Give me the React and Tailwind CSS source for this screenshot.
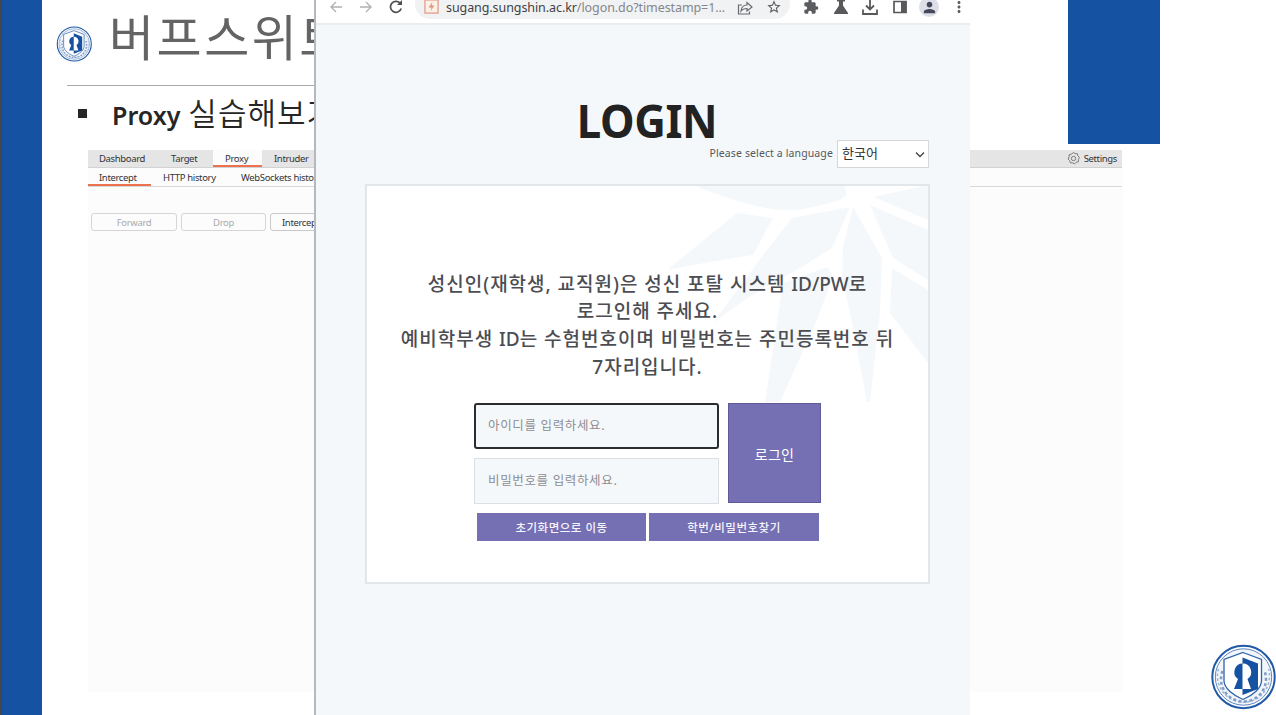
import React from "react";
import { MdExtension, MdStarOutline, MdPerson, MdMoreVert } from "react-icons/md";

const KR = "font-['Noto_Sans','Noto_Sans_CJK_KR',sans-serif]";

function Emblem({ className }) {
  return (
    <svg viewBox="0 0 66 66" className={className}>
      <circle cx="33.500" cy="33" r="31.200" fill="#fff" stroke="#2159a6" strokeWidth="2" />
      <circle cx="33.500" cy="33" r="28.200" fill="#f1f5fa" stroke="#4d7bb8" strokeWidth="0.900" />
      <path d="M8.500 25A26 26 0 1 0 58.500 25" fill="none" stroke="#9bb3d6" strokeWidth="1.500" strokeDasharray="2.500 2.200" />
      <path d="M12.500 27A22.500 22.500 0 1 0 54.500 27" fill="none" stroke="#7f9dc8" strokeWidth="2.500" strokeDasharray="3 2.500" />
      <path d="M33 8.500l18.500 7v21c0 8-9 15-18.500 19-9.500-4-19-11-19-19v-21z" fill="#fff" stroke="#2f64ab" strokeWidth="1.300" />
      <path d="M32.500 13.500L48 19.500V45l-15.500 6z" fill="#1553a2" />
      <path d="M33 19.500a8.500 8.500 0 0 0-5 15.500L24 45h9z" fill="#1553a2" />
      <path d="M32.500 19.500a8.500 8.500 0 0 1 5 15.500L41 45h-8.500z" fill="#fff" />
    </svg>
  );
}

function Slide() {
  return (
    <div className="flex h-full w-full bg-white">
      <div className="w-[42px] shrink-0 border-l-2 border-[#41464f] bg-[#1553a2]" />
      <div className="flex min-w-0 flex-1 flex-col">
        <div className="flex h-[150px] items-start justify-between pr-[116px]">
          <div className="flex w-[400px] flex-col">
            <div className="ml-[25px] flex h-[86px] w-[250px] items-start border-b border-[#aaa]">
              <Emblem className="-ml-[11px] mt-[26px] h-9 w-9 shrink-0" />
              <h1 className={`${KR} ml-[17px] whitespace-nowrap text-[49px] font-normal leading-[74px] tracking-[2.500px] text-[#646464]`}>버프스위트</h1>
            </div>
            <div className="flex h-[56px] items-center pl-9">
              <span className="mt-[-1px] h-[9px] w-[9px] bg-[#262626]" />
              <span className={`${KR} ml-[25px] whitespace-nowrap text-[25px] font-semibold leading-[38px] text-[#262626]`}>
                Proxy<span className="ml-[8px] text-[31px] font-[350] tracking-[1px]">실습해보기</span>
              </span>
            </div>
          </div>
          <div className="h-[144px] w-[92px] bg-[#1553a2]" />
        </div>
        <BurpPanel />
      </div>
    </div>
  );
}

function BurpPanel() {
  return (
    <div className="ml-[46px] h-[542px] w-[1034px] overflow-hidden bg-[#fcfcfc] font-['Noto_Sans'] text-[9.500px] tracking-[-0.350px] text-[#333]">
      <div className="flex h-[18px] items-stretch border-b border-[#d2d2d2] bg-[#e5e5e5] leading-[17px]">
        <span className="w-[70px] pl-[11px]">Dashboard</span>
        <span className="w-[55px] pl-[13px]">Target</span>
        <span className="w-[49px] border-b-2 border-[#ec7150] bg-[#fcfcfc] pl-3">Proxy</span>
        <span className="pl-3">Intruder</span>
        <span className="ml-auto flex items-center gap-[4px] pr-[5px]">
          <svg viewBox="0 0 24 24" className="h-[13px] w-[13px]" fill="none" stroke="#777" strokeWidth="1.800">
            <path d="M12 1l3 2 4 0 1 4 3 3-2 4 0 4-4 1-3 3-4-2-4 0-1-4-3-3 2-4 0-4 4-1z" />
            <circle cx="12" cy="12" r="4" />
          </svg>
          Settings
        </span>
      </div>
      <div className="flex h-[19px] items-stretch border-b border-[#d8d8d8] leading-[19px]">
        <span className="w-[63px] border-b-2 border-[#ec7150] pl-[11px]">Intercept</span>
        <span className="w-[90px] pl-3">HTTP history</span>
        <span className="whitespace-nowrap">WebSockets history</span>
      </div>
      <div className="mt-[26px] flex gap-1 pl-[3px] text-center leading-[17px]">
        <span className="h-[18px] w-[86px] rounded-[3px] border border-[#d5d5d5] text-[#aaa]">Forward</span>
        <span className="h-[18px] w-[85px] rounded-[3px] border border-[#d5d5d5] text-[#aaa]">Drop</span>
        <span className="h-[18px] w-[90px] whitespace-nowrap rounded-[3px] border border-[#c9c9c9] pl-[11px] text-left">Intercept is on</span>
      </div>
    </div>
  );
}

function BrowserBar() {
  return (
    <div className="flex h-[25px] shrink-0 items-start border-b-2 border-[#ebecee] bg-white text-[#5b5c60]">
      <svg viewBox="0 0 80 20" className="ml-[14px] mt-[-3px] h-5 w-20 shrink-0" fill="none" strokeWidth="1.300">
        <path d="M12 10H1m5-5l-5 5 5 5" stroke="#b0b0b0" />
        <path d="M30 10h11m-5-5l5 5-5 5" stroke="#b0b0b0" />
      </svg>
      <svg viewBox="0 0 20 20" className="-ml-6 mt-[-3px] h-5 w-5 shrink-0" fill="none" stroke="#4d4e51" strokeWidth="1.700">
        <path d="M14.500 6.700A5.500 5.500 0 1 0 15.200 11.500" />
        <path d="M11 8h5V3z" fill="#4d4e51" stroke="none" />
      </svg>
      <div className="ml-[9px] flex h-[19px] w-[375px] shrink-0 items-start rounded-b-[15px] bg-[#f1f2f4]">
        <svg viewBox="0 0 16 16" className="ml-[9px] mt-[-1px] h-[15px] w-[15px] shrink-0" fill="#fdf0e7" stroke="#dc927b" strokeWidth="1.200">
          <rect x="1" y="1" width="14" height="14" />
          <path d="M9 3L5 9h3l-1 4 4-6H8z" fill="#dc927b" stroke="none" />
        </svg>
        <span className="ml-[7px] w-[282px] whitespace-nowrap font-['Noto_Sans'] text-[12.500px] leading-[16px] tracking-[-0.080px] text-[#858689]">
          <span className="text-[#414245]">sugang.sungshin.ac.kr</span>/logon.do?timestamp=1...
        </span>
        <svg viewBox="0 0 16 16" className="ml-[9px] h-4 w-4 shrink-0" fill="none" stroke="#6a6b6e" strokeWidth="1.200">
          <path d="M5 5H1.500v9h11v-2.500M4 11c.5-4 3-6 6-6V2.500L15 7l-5 4V8.500C7.500 8.500 5.500 9 4 11z" />
        </svg>
        <MdStarOutline className="-mt-px ml-[13px] h-4 w-4 shrink-0" />
      </div>
      <div className="ml-[13px] mt-[-3px] flex shrink-0 items-center">
        <MdExtension className="h-[16px] w-[16px]" />
        <svg viewBox="0 0 16 16" className="ml-[14px] h-4 w-4" fill="#59595c">
          <path d="M4 1h8v1.500h-2v4l5 7.500c.2.700 0 1-.7 1H1.700C1 15 .8 14.700 1 14l5-7.500v-4H4z" />
        </svg>
        <svg viewBox="0 0 16 16" className="ml-[13px] h-4 w-4" fill="none" stroke="#59595c" strokeWidth="1.800">
          <path d="M8 0v10M4 6.500L8 10.500l4-4M1 10.500V15h14v-4.500" />
        </svg>
        <svg viewBox="0 0 16 16" className="ml-[14px] h-4 w-4">
          <path d="M2 2.500h12v11H2z" fill="none" stroke="#59595c" strokeWidth="1.700" />
          <path d="M9 2h5.500v12H9z" fill="#59595c" />
        </svg>
        <span className="ml-[11px] flex h-5 w-5 items-center justify-center rounded-full bg-[#dedee9]">
          <MdPerson className="h-[17px] w-[17px] text-[#46485a]" />
        </span>
        <MdMoreVert className="ml-[11px] h-[18px] w-[18px]" />
      </div>
    </div>
  );
}

function LeafPattern() {
  return (
    <svg viewBox="0 0 290 220" className="absolute right-0 top-0 h-[220px] w-[290px]" fill="#f5f8fb">
      <path d="M59 0H206L209 9 202 14Q165 26 139 24 110 20 62 2z" />
      <path d="M99 27L135 32 115 69Q70 76 29 84z" />
      <path d="M154 32L212 21 194 62 159 84Q115 106 75 137L119 77z" />
      <path d="M189 81L195 91 179 134 142 216H127L145 97z" />
      <path d="M215 21L244 72 242 127 232 216H229L214 137 204 91 205 61z" />
      <path d="M232 19L290 44V94L255 72z" />
      <path d="M254 82L290 104V177L252 127z" />
      <path d="M235 11L285 0H290V34z" />
    </svg>
  );
}

function LoginWindow() {
  return (
    <div className="absolute left-[314px] top-0 flex h-[715px] w-[656px] flex-col overflow-hidden border-l-2 border-[#b5b9bf] bg-[#f5f8fb]">
      <BrowserBar />
      <div className={`${KR} flex flex-1 flex-col pl-[49px]`}>
        <h2 className="mt-[67px] h-[48px] w-[564px] scale-x-[0.940] text-center text-[46.500px] font-bold leading-[56px] tracking-[-0.400px] text-[#222]">LOGIN</h2>
        <div className="flex h-[28px] w-[564px] items-center justify-end text-[#56585b]">
          <span className="whitespace-nowrap text-[10.500px] tracking-[0.120px]">Please select a language</span>
          <div className="ml-1 flex h-[28px] w-[92px] items-center justify-between border border-[#d5d7da] bg-white pl-1 pr-[3px] text-[13px] text-[#333]">
            한국어
            <svg viewBox="0 0 10 10" className="h-[10px] w-[10px]" fill="none" stroke="#444" strokeWidth="1.300">
              <path d="M1 3.500l4 4 4-4" />
            </svg>
          </div>
        </div>
        <div className="relative mt-4 flex h-[400px] w-[565px] flex-col items-center border-2 border-[#e3e6e9] bg-white">
          <LeafPattern />
          <p className="relative mt-[84.500px] whitespace-nowrap text-center text-[19px] font-medium leading-[27.700px] tracking-[0.980px] text-[#4c4d52]">
            성신인(재학생, 교직원)은 성신 포탈 시스템 <span className="tracking-[0px]">ID/PW</span>로<br />
            로그인해 주세요.<br />
            예비학부생 <span className="tracking-[0px]">ID</span>는 수험번호이며 비밀번호는 주민등록번호 뒤<br />
            7자리입니다.
          </p>
          <div className="relative mt-[22px] flex h-[101px] w-[347px] justify-between text-[12.500px] tracking-[0.650px] text-[#8c8d90]">
            <div className="flex flex-col justify-between">
              <div className="flex h-[46px] w-[245px] items-center rounded-[3px] border-2 border-[#2c2c30] bg-[#f5f8fb] pl-3 pt-px">아이디를 입력하세요.</div>
              <div className="flex h-[46px] w-[245px] items-center border border-[#dcdfe3] bg-[#f5f8fb] pl-[13px] pt-px">비밀번호를 입력하세요.</div>
            </div>
            <div className="flex h-[100px] w-[93px] items-center justify-center border border-[#625998] bg-[#7570b3] pt-[3px] text-[14px] tracking-[0.300px] text-white">로그인</div>
          </div>
          <div className="relative ml-px mt-[9px] flex w-[342px] justify-between text-[11.500px] font-medium tracking-[0.500px] text-[#f5f5fb]">
            <div className="flex h-7 w-[169px] items-center justify-center bg-[#7570b3]">초기화면으로 이동</div>
            <div className="flex h-7 w-[170px] items-center justify-center bg-[#7570b3]">학번/비밀번호찾기</div>
          </div>
        </div>
      </div>
      <div className="absolute left-[-2px] top-[437px] h-[12px] w-[2px] bg-[#333]" />
      <div className="absolute left-[-2px] top-[500px] h-[4px] w-px bg-[#777]" />
      <div className="absolute left-[-2px] top-[513px] h-[6px] w-px bg-[#444]" />
      <div className="absolute left-[-2px] top-[549px] h-[20px] w-[2px] bg-[#d96a3b]" />
    </div>
  );
}

export default function App() {
  return (
    <div className="relative h-[715px] w-[1276px] overflow-hidden">
      <Slide />
      <LoginWindow />
      <Emblem className="absolute left-[1210px] top-[644px] h-[66px] w-[66px]" />
    </div>
  );
}
